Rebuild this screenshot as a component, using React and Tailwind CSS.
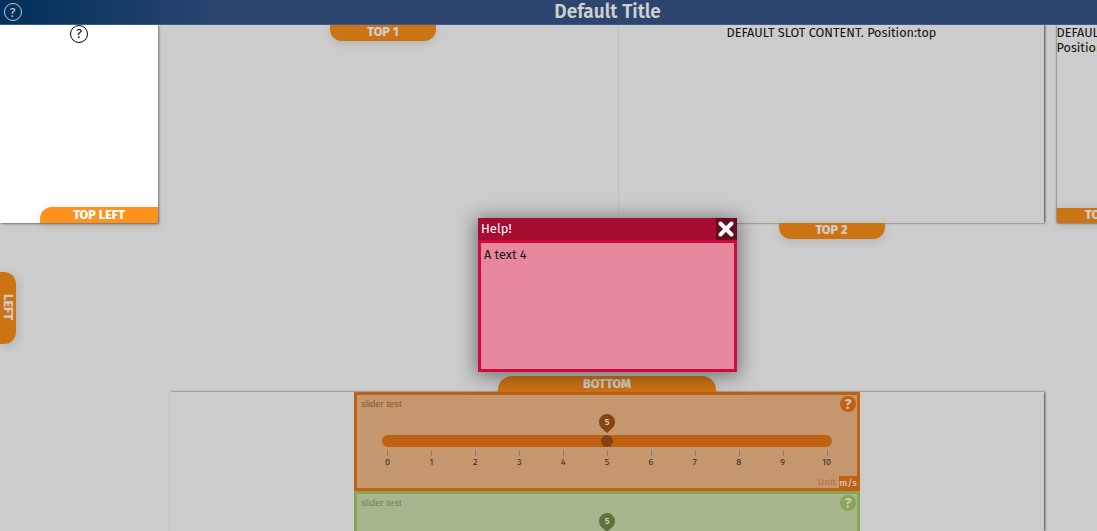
const themes = {
  orange: {
    box: "bg-[#c5976f] border-[#bf6012]", label: "text-[#8b5328]", accent: "bg-[#bf6012]",
    dark: "bg-[#87430d]", fill: "fill-[#87430d]", unit: "text-[#c06a35]",
  },
  green: {
    box: "bg-[#a8b68f] border-[#87a552]", label: "text-[#71854f]", accent: "bg-[#87a552]",
    dark: "bg-[#5f743a]", fill: "fill-[#5f743a]", unit: "text-[#87a552]",
  },
};

function HelpRing({ className }) {
  return (
    <span className={`flex size-[18px] shrink-0 items-center justify-center rounded-full border-[1.5px] text-[13px] leading-none ${className}`}>?</span>
  );
}

function Tab({ children, className }) {
  return (
    <div className={`flex shrink-0 items-center justify-center bg-[#cc7314] text-[12.6px] leading-none font-extrabold text-[#d1cccd] shadow-[0_2px_10px_rgba(0,0,0,0.13)] ${className}`}>
      {children}
    </div>
  );
}

function Slider({ theme }) {
  const t = themes[theme];
  return (
    <section className={`h-[99px] w-[506px] shrink-0 border-[3px] ${t.box}`}>
      <div className="flex h-[18px] items-start justify-between">
        <span className={`mt-[3px] ml-[4px] font-['Liberation_Sans',sans-serif] text-[9.4px] leading-[11px] tracking-[0.06px] ${t.label}`}>slider test</span>
        <span className={`mt-[1px] mr-[1px] flex size-[16px] items-center justify-center rounded-full text-[15px] leading-none font-semibold text-[#d0cbc8] ${t.accent}`}>?</span>
      </div>
      <div className="relative flex h-[22px] justify-center pt-px">
        <svg className={`h-[19px] w-4 ${t.fill}`} viewBox="0 0 16 19">
          <path d="M8 19 2 13.4A8 8 0 1 1 14 13.4Z" />
        </svg>
        <span className="absolute top-[4px] text-[9px] leading-[11px] font-semibold text-[#d0cbc8]">5</span>
      </div>
      <div className={`mx-auto -mt-[0.5px] flex h-[12.5px] w-[450px] items-center justify-center rounded-full ${t.accent}`}>
        <span className={`size-[12.5px] rounded-full ${t.dark}`} />
      </div>
      <div className="mx-auto mt-[3px] grid w-[483px] grid-cols-11">
        {Array.from({ length: 11 }, (_, i) => (
          <div key={i} className="flex flex-col items-center text-[9px] leading-[11px] text-[#362b22]">
            <span className="ml-px h-[6px] w-px bg-[#8b7d71]" />
            <span className="mt-px">{i}</span>
          </div>
        ))}
      </div>
      <div className="mt-[8px] flex h-[13px] items-center justify-end text-[9.6px] leading-[13px]">
        <span className={`mr-[3px] ${t.unit}`}>Unit</span>
        <span className={`flex w-[18px] justify-center pt-px font-medium text-[#d5c8bd] ${t.accent}`}>m/s</span>
      </div>
    </section>
  );
}

export default function App() {
  return (
    <div className="relative flex h-[531px] w-[1097px] flex-col overflow-hidden bg-[#cccccc] font-['Fira_Sans','Noto_Sans',sans-serif] text-[#111]">
      <header className="relative flex h-[25px] shrink-0 items-center justify-center border-b border-[#41598a] bg-[linear-gradient(90deg,#03305b_0,#07335f_40px,#2d466f_230px)]">
        <HelpRing className="absolute left-[3.5px] border-[#c5cbd1] text-[#c5cbd1]" />
        <h1 className="ml-[118px] pb-px text-[19px] leading-none font-semibold text-[#d0d0d0]">Default Title</h1>
      </header>

      <div className="flex h-[198px] shrink-0">
        <section className="flex w-[158px] shrink-0 flex-col items-center justify-between bg-white text-black shadow-[1px_1px_2px_rgba(0,0,0,0.45)]">
          <HelpRing className="-mt-[0.5px] border-black" />
          <Tab className="h-4 w-[118px] self-end rounded-tl-[12px] !bg-[#ff911d] !text-white">TOP LEFT</Tab>
        </section>
        <section className="flex w-[461px] shrink-0 justify-center pr-[11px]">
          <Tab className="h-[15.5px] w-[106px] rounded-b-[12px]">TOP 1</Tab>
        </section>
        <section className="flex w-[425px] shrink-0 flex-col items-center shadow-[0.5px_-0.5px_2px_rgba(0,0,0,0.65)] [clip-path:inset(0_-4px_-30px_-1px)]">
          <p className="h-[198px] shrink-0 text-[12.68px] leading-[15px]">DEFAULT SLOT CONTENT. Position:top</p>
          <Tab className="h-[15.5px] w-[106px] rounded-b-[12px]">TOP 2</Tab>
        </section>
        <section className="ml-[12.5px] flex w-[158px] shrink-0 flex-col justify-between shadow-[0_0_2px_rgba(0,0,0,0.75)] [clip-path:inset(0_-4px_-20px_-4px)]">
          <p className="text-[12.68px] leading-[15px]">DEFAULT SLOT CONTENT.<br />Position:top-right</p>
          <Tab className="h-[15.5px] w-[118px] !justify-start pl-[28.5px]">TOP RIGHT</Tab>
        </section>
      </div>

      <div className="flex h-[169px] shrink-0 items-start pt-[48.5px]">
        <div className="flex h-[72px] w-4 shrink-0 items-center justify-center rounded-r-[12px] bg-[#cc7314] text-[12.6px] leading-none font-extrabold text-[#d1cccd] shadow-[2px_2px_10px_rgba(0,0,0,0.12)] [writing-mode:vertical-rl]">LEFT</div>
      </div>

      <section className="relative ml-[170px] flex h-[139px] w-[874px] shrink-0 flex-col items-center shadow-[0.5px_0_2px_rgba(0,0,0,0.65)]">
        <Tab className="-mt-4 h-4 w-[218px] rounded-t-[14px]">BOTTOM</Tab>
        <Slider theme="orange" />
        <Slider theme="green" />
      </section>

      <div role="dialog" className="absolute top-[218px] left-[478px] flex h-[154px] w-[259px] flex-col bg-[#d10a3e] shadow-[0_2px_18px_2px_rgba(0,0,0,0.45)]">
        <div className="flex h-[22px] shrink-0 items-center justify-between bg-[#a50c2f] pl-[3px] text-[13px] font-normal text-white">
          <span>Help!</span>
          <button className="flex h-[22px] w-[21px] items-center justify-start bg-[#690b20] pl-[2px]">
            <svg viewBox="0 0 16 16" className="size-4 stroke-white stroke-[4]">
              <path d="m2.5 2.5 11 11m0-11-11 11" strokeLinecap="round" />
            </svg>
          </button>
        </div>
        <div className="mx-[3px] mt-[3px] mb-[3px] flex-1 bg-[#e7889e] px-[3px] pt-[4px] text-[12.68px] leading-[15px] text-[#211216]">A text 4</div>
      </div>
    </div>
  );
}
